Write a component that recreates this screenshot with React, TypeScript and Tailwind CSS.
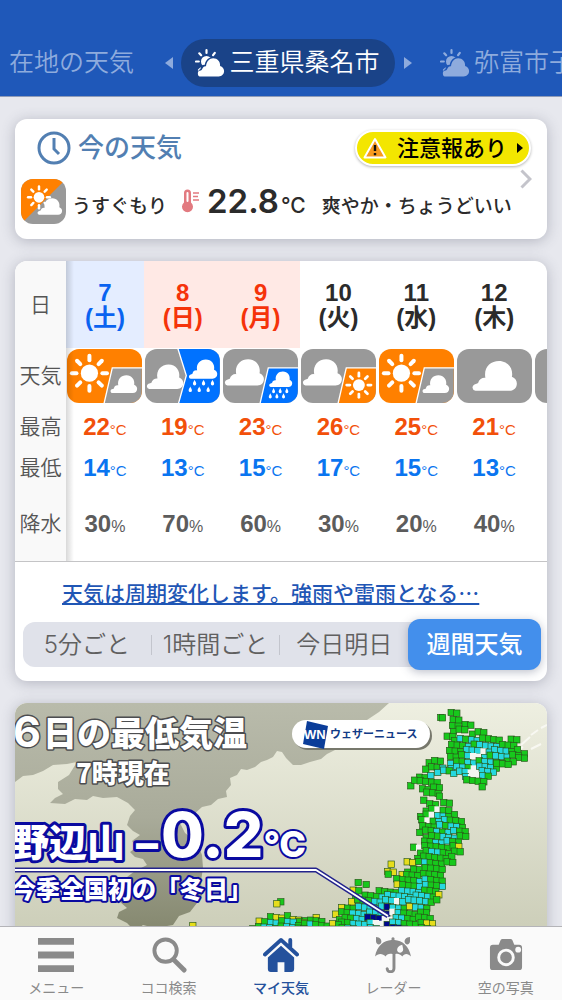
import type { ReactNode } from "react";
import clsx from "clsx";

type Sky = "sunCloud" | "cloudThenRain" | "cloudRain" | "cloudSun" | "cloud";

interface Day {
  date: number;
  weekday: string;
  tone: "sat" | "holiday" | "plain";
  sky: Sky;
  high: number;
  low: number;
  rain: number;
}

const days: Day[] = [
  { date: 7, weekday: "土", tone: "sat", sky: "sunCloud", high: 22, low: 14, rain: 30 },
  { date: 8, weekday: "日", tone: "holiday", sky: "cloudThenRain", high: 19, low: 13, rain: 70 },
  { date: 9, weekday: "月", tone: "holiday", sky: "cloudRain", high: 23, low: 15, rain: 60 },
  { date: 10, weekday: "火", tone: "plain", sky: "cloudSun", high: 26, low: 17, rain: 30 },
  { date: 11, weekday: "水", tone: "plain", sky: "sunCloud", high: 25, low: 15, rain: 20 },
  { date: 12, weekday: "木", tone: "plain", sky: "cloud", high: 21, low: 13, rain: 40 },
];

const toneClass = {
  sat: "bg-[#e4edff] text-[#0a63f0]",
  holiday: "bg-[#ffe9e5] text-[#f5330a]",
  plain: "text-[#2b2b2b]",
};

const card = "overflow-hidden rounded-xl bg-white shadow-[0_2px_14px_rgba(70,75,95,0.32)]";

/* Weather symbols */

function Sun({ x, y, r }: { x: number; y: number; r: number }) {
  return (
    <g transform={`translate(${x} ${y}) scale(${r / 26})`}>
      <circle r="26" fill="#fff" />
      {[0, 45, 90, 135, 180, 225, 270, 315].map((a) => (
        <line key={a} x1="39" x2="53" stroke="#fff" strokeWidth="12" strokeLinecap="round" transform={`rotate(${a})`} />
      ))}
    </g>
  );
}

function Cloud({ x, y, s }: { x: number; y: number; s: number }) {
  return (
    <path
      transform={`translate(${x} ${y}) scale(${s})`}
      fill="#fff"
      d="M10 90a10 10 0 0 1-3-19q7-2 11-4a20 20 0 0 1 22-16C34 20 55 0 81 0c27 0 44 23 39 48 10 4 15 12 15 20 0 13-9 22-22 22z"
    />
  );
}

function Drops({ points, s }: { points: [number, number][]; s: number }) {
  return (
    <>
      {points.map(([x, y]) => (
        <path
          key={`${x}-${y}`}
          transform={`translate(${x} ${y}) scale(${s})`}
          fill="#fff"
          d="M0-9C2-4 5-1 5 3a5 5 0 0 1-10 0C-5-1-2-4 0-9z"
        />
      ))}
    </>
  );
}

function Corner({ fill, children }: { fill: string; children: ReactNode }) {
  return (
    <>
      <path d="M111 163L136 57H225V163z" fill={fill} />
      <path d="M111 165L136 57H227" fill="none" stroke="#fff" strokeWidth="4" />
      {children}
    </>
  );
}

function SkyIcon({ sky }: { sky: Sky }) {
  return (
    <svg
      viewBox="0 0 225 163"
      className={clsx("mx-auto block h-[54px] w-[75px] rounded-xl", sky === "sunCloud" ? "bg-[#ff8000]" : "bg-[#999]")}
      aria-hidden="true"
    >
      {sky === "sunCloud" && (
        <>
          <Sun x={67} y={73} r={26} />
          <Corner fill="#999">
            <Cloud x={130} y={79} s={0.6} />
          </Corner>
        </>
      )}
      {sky === "cloudThenRain" && (
        <>
          <path d="M99 0L124 80L101 163H225V0z" fill="#0072ff" />
          <path d="M98-3L124 80L100 166" fill="none" stroke="#fff" strokeWidth="4" />
          <Cloud x={4} y={47} s={0.82} />
          <Cloud x={131} y={32} s={0.64} />
          <Drops s={1} points={[[149, 102], [176, 102], [203, 102], [136, 122], [163, 122], [190, 122]]} />
        </>
      )}
      {sky === "cloudRain" && (
        <>
          <Cloud x={4} y={31} s={0.88} />
          <Corner fill="#0072ff">
            <Cloud x={138} y={68} s={0.52} />
            <Drops s={0.9} points={[[152, 126], [172, 126], [192, 126], [142, 142], [162, 142], [182, 142]]} />
          </Corner>
        </>
      )}
      {sky === "cloudSun" && (
        <>
          <Cloud x={4} y={31} s={0.88} />
          <Corner fill="#ff8000">
            <Sun x={174} y={109} r={18} />
          </Corner>
        </>
      )}
      {sky === "cloud" && <Cloud x={45} y={36} s={1} />}
    </svg>
  );
}

function PlaceIcon({ edge }: { edge: string }) {
  return (
    <svg viewBox="0 0 30 28" className="h-7 w-[30px]" aria-hidden="true">
      <g stroke="currentColor" strokeWidth="2.200" strokeLinecap="round">
        <path d="M11.500 1.200v2.800M4.300 4.300l1.800 2M19.800 3.800l-1.700 2.400M1 12.500h2.800M4 21l2-1.800" />
      </g>
      <circle cx="11.500" cy="12.500" r="5.500" fill="currentColor" />
      <path
        d="M6.500 28a4.200 4.200 0 0 1-1-8 4 4 0 0 1 4.300-4.300C10.500 11 14 8 18.200 8c4.800 0 8 3.500 8 8.200 2.200.9 3.300 2.800 3.300 5.200 0 3.800-2.500 6.600-6 6.600z"
        fill={edge}
      />
      <path
        d="M6 27.500a3 3 0 0 1-.3-6c.8-.3 1.500-1.200 1.900-2.300.7-1.600 2-2.300 3.400-2C11.500 12.500 14.500 9.300 18.200 9.300c4.200 0 7.200 3.300 6.900 7.600 2.500.8 4 2.700 4 5.200 0 3.100-2.200 5.400-5.400 5.400z"
        fill="currentColor"
      />
    </svg>
  );
}

/* Map tiles as runs: left edge, top edge, one letter per tile */
const tileRuns: [number, number, string][] = [
  [505, 46, "GG"], [472, 58, "G"], [478, 62, "G"], [510, 62, "GG"], [545, 78, "GG"], [510, 80, "GG"],
  [512, 96, "GGG"], [492, 112, "GG"], [566, 104, "GGG"], [512, 124, "GCGCCGG"], [632, 126, "GG"], [684, 127, "GG"],
  [505, 142, "GGGCGCCCCGGG"], [498, 158, "GGGCCCWCCCCGG"], [500, 174, "GGGCWWCGCCCGG"], [726, 165, "G"], [708, 176, "GG"],
  [440, 190, "GGG"], [503, 192, "CGGCCGCCGGGG"], [430, 210, "GGGC"], [503, 208, "CCCGWCCCG"], [640, 198, "GGG"],
  [466, 220, "CCG"], [410, 236, "GGC"], [512, 222, "CCCWWCCC"], [545, 234, "CWWCG"], [385, 260, "G"], [396, 250, "GGGGG"],
  [550, 248, "GGGG"], [598, 266, "G"], [420, 270, "GGGG"], [432, 286, "GGG"], [422, 302, "G"], [470, 296, "G"],
  [482, 312, "GG"], [442, 320, "GG"], [430, 336, "GGWGG"], [412, 352, "GGWCCGG"], [415, 368, "GWGCCGGG"],
  [417, 384, "GGGCGCCG"], [412, 400, "GGGCGCCGG"], [430, 416, "GGGCCCGG"], [424, 432, "GGCCCGG"], [392, 446, "GWGGGGGGY"],
  [412, 462, "GGCCGGGG"], [403, 478, "GGGGGGG"], [326, 500, "Y"], [312, 518, "YY"], [372, 492, "YY"], [315, 532, "G"],
  [358, 526, "YGY"], [405, 494, "GCGGGGG"], [392, 512, "GGGGGG"], [372, 530, "GGGGGGG"], [342, 546, "GGGGCCGGG"],
  [225, 557, "G"], [250, 556, "G"], [342, 562, "YGGGCCGGC"], [212, 575, "YG"], [290, 580, "GGGGCCCCGGG"],
  [215, 594, "G"], [244, 594, "GGGCCCCCCCCCGY"], [205, 608, "YGGGCCCCWCCCCCGG"], [175, 628, "YGGCCCCCNCCGYCCG"],
  [160, 645, "YGGCCCCCCNWCGGGGG"], [170, 661, "GGGCCNNNWWCCGGGGG"], [160, 676, "GGGCCCCWWNCCGGGGYY"],
  [-5, 620, "G"], [-20, 623, "Y"], [-40, 664, "GYYGYYG"], [100, 661, "Y"], [50, 670, "GYGGG"], [-70, 680, "YGCCGCCGGCGGGYG"],
  [-270, 686, "Y"], [160, 692, "GGCCCCCCWWNNCCGGGGY"], [-90, 696, "GGCCGGCCGGCCGGG"], [-100, 712, "GGGCCGGYGGCCGGGCCCCCCCCCCCGGGGG"],
];

const tileFill: Record<string, string> = {
  G: "#17c81c",
  C: "#25d8df",
  Y: "#e6dd1c",
  N: "#00088c",
  W: "#f4f5f2",
};

function TemperatureMap() {
  return (
    <svg
      viewBox="0 0 532 250"
      className="block h-auto w-full"
      fontFamily='"Noto Sans CJK JP", sans-serif'
      fontWeight="900"
      strokeLinejoin="round"
      paintOrder="stroke"
      fill="#fff"
    >
      <defs>
        <linearGradient id="sea" x2="0" y2="1">
          <stop stopColor="#eeefe1" />
          <stop offset="1" stopColor="#c9cbb5" />
        </linearGradient>
        <linearGradient id="land" x2="0" y2="1">
          <stop stopColor="#b9bbab" />
          <stop offset=".5" stopColor="#a9ab9a" />
          <stop offset="1" stopColor="#85886f" />
        </linearGradient>
      </defs>
      <rect width="532" height="250" fill="url(#sea)" />
      <path
        fill="url(#land)"
        d="M0 0H374L364 9 352 17 346 25 334 31 320 47 312 51 306 56 295 59 286 62 278 62 271 55 267 49 262 48 258 54 252 57 246 59 240 64 232 67 226 66 222 72 215 75 216 82 211 88 212 94 203 96 196 102 187 104 178 112 165 120 170 130 182 139 187 152 188 165 186 178 187 192 182 200 175 209 164 213 158 222 140 225 128 222 120 228 112 220 102 215 104 209 112 205 104 198 106 190 100 184 104 178 112 174 120 168 132 162 128 156 120 154 115 149 122 144 117 138 125 132 118 128 112 122 115 113 120 107 113 100 102 94 88 95 78 93 72 97 60 96 50 101 35 100 40 95 48 91 43 86 43 79 54 72 62 59 52 61 38 62 28 68 18 72 8 73 0 79z"
      />
      <path d="M506 42l9-8M516 32l7-5M526 25l6-3M500 48l8-4M516 46l10-5" stroke="#f8f8f2" strokeWidth="2" />
      <g transform="translate(265 -8) scale(.33333)" paintOrder="normal" strokeLinejoin="miter">
        {tileRuns.map(([x, y, run]) =>
          run.split("").map((t, i) => (
            <rect
              key={`${x}-${y}-${i}`}
              x={x + i * 17 + ((i * 5 + y) % 5) - 2}
              y={y + ((i * 11 + x) % 9) - 4}
              width="19"
              height="19"
              fill={tileFill[t]}
              stroke={t === "W" ? "none" : "#2a5a1c"}
              strokeWidth="2"
            />
          ))
        )}
      </g>
      <path d="M0 167H301L373 213" fill="none" stroke="#23238c" strokeWidth="5" />
      <path d="M0 167H301L373 213" fill="none" stroke="#fff" strokeWidth="2" />
      <g stroke="#4c4d50" strokeWidth="3">
        <text x="-2" y="44" fontSize="43" fontFamily='Inter, "Liberation Sans", sans-serif' fontWeight="700">
          6
        </text>
        <text x="28" y="43" fontSize="34">
          日の最低気温
        </text>
        <text x="61" y="80" fontSize="26">
          7時現在
        </text>
      </g>
      <g stroke="#0a0aa0" strokeWidth="6">
        <text x="-4" y="153" fontSize="38">
          野辺山
        </text>
        <text x="-3" y="195" fontSize="24" strokeWidth="4">
          今季全国初の「冬日」
        </text>
        <g fontFamily='Inter, "Liberation Sans", sans-serif' fontWeight="800">
          <text x="121" y="156" fontSize="44">
            –
          </text>
          <text x="146" y="154" fontSize="62">
            0.2
            <tspan fontSize="36" strokeWidth="4">°C</tspan>
          </text>
        </g>
      </g>
      <rect x="279" y="19" width="138" height="28" rx="14" fill="#77786c" />
      <rect x="277" y="17" width="138" height="28" rx="14" />
      <path d="M292 18l21 5-4 23-21-5z" fill="#0b3d99" />
      <text x="289" y="36" fontSize="13" fontFamily='"Liberation Sans", sans-serif' fontWeight="700">
        WN
      </text>
      <text x="315" y="35" fontSize="11" fontWeight="700" fill="#123a86">
        ウェザーニュース
      </text>
    </svg>
  );
}

/* Bottom tabs */

const tabs: { label: string; active?: boolean; icon: ReactNode }[] = [
  {
    label: "メニュー",
    icon: <path d="M0 1h37v7H0zM0 15h37v7H0zM0 29h37v7H0z" />,
  },
  {
    label: "ココ検索",
    icon: (
      <g fill="none" stroke="currentColor" strokeWidth="4">
        <circle cx="15" cy="14" r="11.500" />
        <path d="M23 23l11 11" strokeWidth="5" strokeLinecap="round" />
      </g>
    ),
  },
  {
    label: "マイ天気",
    active: true,
    icon: (
      <>
        <path d="M2 18L18.500 3 35 18M28 3v7" fill="none" stroke="currentColor" strokeWidth="4" strokeLinecap="round" strokeLinejoin="round" />
        <path d="M18.500 9L32 21v12q0 3-3 3h-7V26h-7v10H8q-3 0-3-3V21z" />
      </>
    ),
  },
  {
    label: "レーダー",
    icon: (
      <>
        <path d="M0 20C2 9 9 3.500 17 3V1q1.500-1.500 3 0v2c8 .5 15 6 17 17-3-3.500-7-3.500-9 0-2-2.500-5-3.500-7-2.500V32c0 7-10 7-10 0q1.500-2 3 0c0 3 4 3 4 0V17.500c-3-1-6 0-7 2.500-3-3.500-8-3.500-11 0z" />
        <path d="M1 0c4 0 6 3 5.500 5.500C5.500 9 1 8 1 4zM36 0c-4 0-6 3-5.500 5.500C31.500 9 36 8 36 4z" />
        <path d="M28 8c-4 1-6 4-5 6.500 1.500 3 6 1.500 6-2z" fill="#fafafa" />
      </>
    ),
  },
  {
    label: "空の写真",
    icon: (
      <>
        <path d="M5 8h6l2-5q.5-1 2-1h8q1.500 0 2 1l2 5h5q3 0 3 3v20q0 3-3 3H5q-3 0-3-3V11q0-3 3-3z" />
        <circle cx="18.500" cy="21" r="7.500" fill="none" stroke="#fafafa" strokeWidth="3" />
        <circle cx="31" cy="13" r="3" fill="#fafafa" />
      </>
    ),
  },
];

const rowLabel =
  "relative bg-[#f9f9f9] text-[21px] font-[350] text-[#555] after:absolute after:inset-y-0 after:left-full after:w-2 after:bg-linear-to-r after:from-black/15 after:to-transparent";

const rangeTab = "h-[45px] flex-1 text-center whitespace-nowrap text-[#606060]";

export default function App() {
  return (
    <div className="flex h-screen flex-col overflow-hidden bg-[#e7e8ee] font-['Liberation_Sans','Noto_Sans_CJK_JP',sans-serif] text-[#2b2b2b]">
      <header className="flex shrink-0 items-center justify-between overflow-hidden border-b border-[#8e9bb8] bg-[#1f58b9] pt-[39px] pb-[9px] pl-[9px] text-[25px] font-[350] whitespace-nowrap text-[#8eabdd]">
        <button className="w-[156px] shrink-0 text-left">在地の天気</button>
        <svg viewBox="0 0 8 12" className="h-3 w-2 shrink-0 fill-current" aria-hidden="true">
          <path d="M8 0v12L0 6z" />
        </svg>
        <button className="mx-2 flex h-12 shrink-0 items-center gap-1 rounded-full bg-[#1a4388] pr-4 pl-[14px] text-white">
          <PlaceIcon edge="#1a4388" />
          <span>三重県桑名市</span>
        </button>
        <svg viewBox="0 0 8 12" className="h-3 w-2 shrink-0 fill-current" aria-hidden="true">
          <path d="M0 0v12l8-6z" />
        </svg>
        <button className="ml-[28px] flex w-[122px] shrink-0 items-center gap-1 overflow-hidden">
          <span className="shrink-0">
            <PlaceIcon edge="#1f58b9" />
          </span>
          弥富市子
        </button>
      </header>

      <main className="flex min-h-0 flex-1 flex-col gap-[22px] overflow-hidden px-[15px] pt-[22px]">
        {/* Current weather */}
        <section className={clsx(card, "relative shrink-0 pt-[11px] pb-[15px]")}>
          <div className="flex items-center pr-4 pl-[22px]">
            <svg viewBox="0 0 34 34" className="h-[34px] w-[34px] fill-none stroke-[#527fb2] stroke-3" aria-hidden="true">
              <circle cx="17" cy="17" r="15" />
              <path d="M17 7v11l5 5" />
            </svg>
            <h2 className="ml-[7px] text-[26px] leading-9 font-medium text-[#527fb2]">今の天気</h2>
            <button className="ml-auto flex h-9 items-center rounded-full border-2 border-white bg-[#f3e600] px-[6px] text-[22px] font-medium text-black shadow-[0_1px_3px_rgba(0,0,0,0.3)]">
              <svg viewBox="0 0 24 22" className="mr-[10px] h-[22px] w-6" aria-hidden="true">
                <path d="M12 2L22.500 20.500H1.500z" fill="#f79a1e" stroke="#fff" strokeWidth="2" strokeLinejoin="round" />
                <path d="M12 8v6M12 16v2.200" stroke="#111" strokeWidth="2.400" />
              </svg>
              注意報あり
              <svg viewBox="0 0 6 10" className="ml-[10px] h-[10px] w-[6px]" aria-hidden="true">
                <path d="M0 0v10l6-5z" />
              </svg>
            </button>
          </div>
          <div className="mt-3 flex items-center pl-[6px] text-[19px] font-medium whitespace-nowrap">
            <svg viewBox="0 0 135 135" className="h-[45px] w-[45px] rounded-xl bg-[#999]" aria-hidden="true">
              <path d="M0 0H135L0 135z" fill="#ff8000" />
              <Sun x={54} y={55} r={16} />
              <Cloud x={49} y={58} s={0.55} />
            </svg>
            <div className="flex h-[46px] items-baseline pt-[3px] pl-[6px]">
              <span>うすぐもり</span>
              <svg viewBox="0 0 18 24" className="ml-[14px] h-6 w-[18px]" aria-hidden="true">
                <path d="M3 4a3.500 3.500 0 0 1 7 0v9.500a5.500 5.500 0 1 1-7 0z" fill="#e27a80" />
                <path d="M6.500 4v8" stroke="#fff" strokeWidth="2" strokeLinecap="round" />
                <path d="M12 4h6M12 7.500h5M12 11h6" stroke="#e27a80" strokeWidth="1.500" />
              </svg>
              <span className="ml-2 font-['Inter',sans-serif] text-[33px] leading-10 font-semibold">22.8</span>
              <span className="ml-[2px] font-['Inter',sans-serif] text-[21px]">°C</span>
              <span className="ml-4">爽やか・ちょうどいい</span>
            </div>
          </div>
          <svg viewBox="0 0 12 20" className="absolute top-[50px] right-[15px] h-5 w-3" aria-hidden="true">
            <path d="M1.500 1.500L10 10l-8.500 8.500" fill="none" stroke="#c4c4cb" strokeWidth="3" />
          </svg>
        </section>

        {/* Weekly forecast */}
        <section className={clsx(card, "shrink-0")}>
          <div className="overflow-hidden border-b border-[#c4c4c6]">
            <table className="w-[596px] table-fixed border-collapse text-center">
              <colgroup>
                <col className="w-[51px]" />
              </colgroup>
              <thead>
                <tr className="h-[87px]">
                  <th scope="col" className={rowLabel}>
                    日
                  </th>
                  {days.map((d) => (
                    <th key={d.date} scope="col" className={clsx("text-[24px] leading-[25px] font-bold", toneClass[d.tone])}>
                      {d.date}
                      <br />({d.weekday})
                    </th>
                  ))}
                  <td />
                </tr>
              </thead>
              <tbody>
                <tr className="h-[56px]">
                  <th scope="row" className={rowLabel}>
                    天気
                  </th>
                  {days.map((d) => (
                    <td key={d.date}>
                      <SkyIcon sky={d.sky} />
                    </td>
                  ))}
                  <td>
                    <div className="mx-auto h-[54px] w-[75px] rounded-xl bg-[#999]" />
                  </td>
                </tr>
                <tr className="h-[46px] text-[24px] font-bold text-[#f2500a]">
                  <th scope="row" className={rowLabel}>
                    最高
                  </th>
                  {days.map((d) => (
                    <td key={d.date}>
                      {d.high}
                      <span className="text-[15px] font-normal">°C</span>
                    </td>
                  ))}
                </tr>
                <tr className="h-[36px] text-[24px] font-bold text-[#0a75f0]">
                  <th scope="row" className={rowLabel}>
                    最低
                  </th>
                  {days.map((d) => (
                    <td key={d.date}>
                      {d.low}
                      <span className="text-[15px] font-normal">°C</span>
                    </td>
                  ))}
                </tr>
                <tr className="h-[75px] text-[24px] font-bold text-[#5c5c5c]">
                  <th scope="row" className={rowLabel}>
                    降水
                  </th>
                  {days.map((d) => (
                    <td key={d.date}>
                      {d.rain}
                      <span className="text-[16px] font-normal">%</span>
                    </td>
                  ))}
                </tr>
              </tbody>
            </table>
          </div>
          <a
            href="#comment"
            className="mt-[14px] ml-[47px] block w-fit font-['Noto_Sans_CJK_JP',sans-serif] text-[21px] leading-8 font-medium text-[#1f56b5] underline decoration-2 underline-offset-2"
          >
            天気は周期変化します。強雨や雷雨となる…
          </a>
          <div className="mt-[11px] mr-[6px] mb-[11px] ml-2 flex items-center font-['Inter','Noto_Sans_CJK_JP',sans-serif] text-[24px] font-[350]">
            <div className="flex min-w-0 flex-1 items-center rounded-l-xl bg-[#e0e2ea] pr-3">
              <button className={rangeTab}>5分ごと</button>
              <span className="h-5 w-px bg-[#c3c5cd]" />
              <button className={rangeTab}>1時間ごと</button>
              <span className="h-5 w-px bg-[#c3c5cd]" />
              <button className={rangeTab}>今日明日</button>
            </div>
            <button className="-ml-3 h-[51px] w-[133px] shrink-0 rounded-xl bg-[#438fec] font-medium text-white shadow-[0_2px_10px_rgba(60,70,100,0.35)]">
              週間天気
            </button>
          </div>
        </section>

        {/* Topic */}
        <section className={clsx(card, "shrink-0")}>
          <TemperatureMap />
        </section>
      </main>

      <nav className="z-10 grid shrink-0 grid-cols-5 border-t border-[#b4b4b8] bg-[#fafafa] pt-[10px] pb-[2px]">
        {tabs.map((t) => (
          <a
            key={t.label}
            href="#tab"
            className={clsx("flex flex-col items-center gap-[5px] text-[14px] leading-5", t.active ? "font-medium text-[#24519c]" : "text-[#8a8a8a]")}
          >
            <svg viewBox="0 0 37 37" className="h-9 w-9 fill-current" aria-hidden="true">
              {t.icon}
            </svg>
            {t.label}
          </a>
        ))}
      </nav>
    </div>
  );
}
